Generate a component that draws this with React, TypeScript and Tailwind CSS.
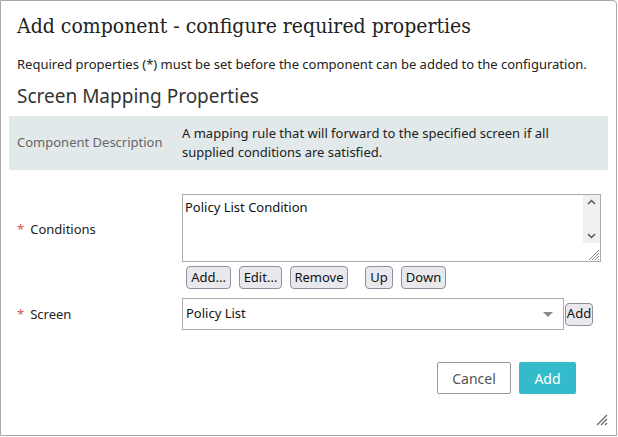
import React from "react";

const sans = { fontFamily: '"Noto Sans", "Open Sans", sans-serif' };

function SmallBtn({ children, className = "" }: { children: React.ReactNode; className?: string }) {
  return (
    <div
      className={`h-[23px] px-[6px] flex items-center justify-center border border-[#8f8f9d] rounded-[4px] bg-[#e9e9ed] text-[13px] text-[#111] ${className}`}
    >
      {children}
    </div>
  );
}

export default function App() {
  return (
    <div className="w-[618px] h-[437px] bg-white" style={sans}>
      <div className="w-[617px] h-[436px] border border-[#a8a8a8] rounded-tr-[4px] relative flex flex-col">
        <div
          className="pl-[16px] pt-[10px] h-[41px] text-[21px] text-[#222] leading-[30px] font-stretch-condensed"
          style={{ fontFamily: '"DejaVu Serif Condensed", "DejaVu Serif", "Liberation Serif", serif' }}
        >
          Add component - configure required properties
        </div>
        <div className="pl-[16px] mt-[13px] text-[13px] text-[#222] leading-[18px]">
          Required properties (*) must be set before the component can be added to the configuration.
        </div>
        <div className="pl-[16px] mt-[9px] text-[19px] text-[#333] leading-[28px]">Screen Mapping Properties</div>
        <div className="mx-[8px] mt-[6px] h-[54px] bg-[#e1e9eb] flex items-center">
          <div className="w-[173px] pl-[8px] text-[13px] text-[#666]">Component Description</div>
          <div className="flex-1 text-[13px] text-[#222] leading-[19px] pr-[20px]">
            A mapping rule that will forward to the specified screen if all supplied conditions are satisfied.
          </div>
        </div>

        <div className="mt-[24px] flex">
          <div className="w-[181px] pl-[16px] flex items-center h-[68px] pt-[3px] text-[13px] text-[#222]">
            <span className="text-[#d9534f] mr-[6px]">*</span>Conditions
          </div>
          <div className="flex flex-col">
            <div className="w-[419px] h-[68px] border border-[#aaa] flex">
              <div className="flex-1 pl-[2px] pt-[3px] text-[13px] text-[#111] leading-[18px]">Policy List Condition</div>
              <div className="w-[17px] flex flex-col">
                <div className="h-[48px] bg-[#f0f0f0] flex flex-col justify-between items-center py-[4px]">
                  <svg width="9" height="6" viewBox="0 0 9 6">
                    <path d="M1 5 L4.5 1.5 L8 5" stroke="#555" strokeWidth="1.5" fill="none" />
                  </svg>
                  <svg width="9" height="6" viewBox="0 0 9 6">
                    <path d="M1 1 L4.5 4.5 L8 1" stroke="#555" strokeWidth="1.5" fill="none" />
                  </svg>
                </div>
                <div className="flex-1 flex items-end justify-end">
                  <svg width="13" height="13" viewBox="0 0 13 13">
                    <path d="M12 2 L2 12 M12 5 L5 12 M12 8 L8 12 M12 11 L11 12" stroke="#888" strokeWidth="1" />
                  </svg>
                </div>
              </div>
            </div>
            <div className="flex mt-[4px] ml-[4px]">
              <SmallBtn className="w-[45px]">Add...</SmallBtn>
              <SmallBtn className="w-[43px] ml-[8px]">Edit...</SmallBtn>
              <SmallBtn className="w-[58px] ml-[8px]">Remove</SmallBtn>
              <SmallBtn className="w-[28px] ml-[17px]">Up</SmallBtn>
              <SmallBtn className="w-[45px] ml-[8px]">Down</SmallBtn>
            </div>
          </div>
        </div>

        <div className="mt-[9px] flex items-center">
          <div className="w-[181px] pl-[16px] pt-[1px] text-[13px] text-[#222]">
            <span className="text-[#d9534f] mr-[6px]">*</span>Screen
          </div>
          <div className="w-[382px] h-[32px] border border-[#aaa] flex items-center pl-[3px] pr-[10px]">
            <div className="flex-1 text-[13px] text-[#111]">Policy List</div>
            <svg width="10" height="5" viewBox="0 0 10 5">
              <path d="M0 0 L10 0 L5 5 Z" fill="#888" />
            </svg>
          </div>
          <SmallBtn className="w-[28px] h-[22px] px-0 ml-[1px] rounded-[3px]">Add</SmallBtn>
        </div>

        <div className="mt-[32px] flex justify-end pr-[40px]">
          <div className="w-[74px] h-[32px] border border-[#999] rounded-[2px] flex items-center justify-center text-[14px] text-[#555]">
            Cancel
          </div>
          <div className="w-[57px] h-[32px] ml-[8px] bg-[#33bbcc] rounded-[2px] flex items-center justify-center text-[14px] text-white">
            Add
          </div>
        </div>

        <svg className="absolute right-[8px] bottom-[9px]" width="12" height="12" viewBox="0 0 12 12">
          <path d="M11 1 L1 11 M11 5 L5 11 M11 9 L9 11" stroke="#666" strokeWidth="1.2" />
        </svg>
      </div>
    </div>
  );
}
